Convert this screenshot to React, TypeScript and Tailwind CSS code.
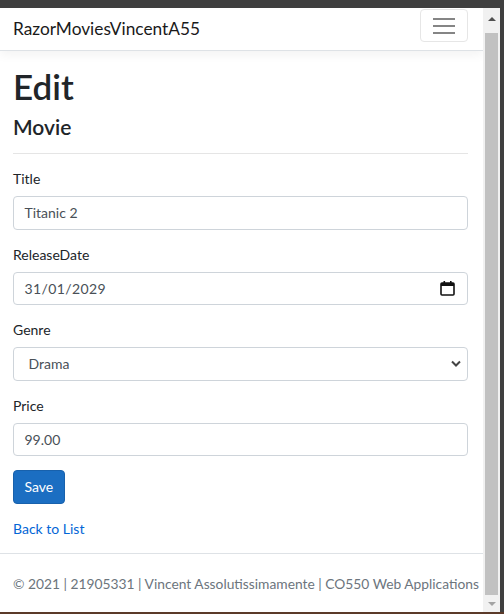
import React from 'react';

const font = { fontFamily: 'Lato, "Open Sans", sans-serif' };

function Field({ label, children }: { label: string; children: React.ReactNode }) {
  return (
    <div className="mb-[14px]">
      <div className="mb-[7px] h-[21px] text-[14px] leading-[21px] text-[#212529]">{label}</div>
      {children}
    </div>
  );
}

function Box({ children }: { children: React.ReactNode }) {
  return (
    <div className="flex h-[33.5px] items-center rounded-[4px] border border-[#ced4da] bg-white px-[10.5px] text-[14px] text-[#495057]">
      {children}
    </div>
  );
}

function Scrollbar() {
  return (
    <div className="flex w-[17px] flex-col items-center bg-[#f1f1f1]">
      <div className="flex h-[17px] w-full items-center justify-center">
        <div className="mt-[4px] h-0 w-0 border-x-[4px] border-b-[4px] border-x-transparent border-b-[#505050]" />
      </div>
      <div className="mt-[8px] w-[13px] flex-1 bg-[#c1c1c1]" />
      <div className="flex h-[17px] w-full items-center justify-center">
        <div className="h-0 w-0 border-x-[4px] border-t-[4px] border-x-transparent border-t-[#a3a3a3]" />
      </div>
    </div>
  );
}

export default function App() {
  return (
    <div className="flex h-[616px] w-[504px] flex-col overflow-hidden bg-white" style={font}>
      <div className="h-[8px] shrink-0 bg-[#3f3f3f]" />
      <div className="flex h-[604px] shrink-0">
        <div className="flex w-[483px] flex-col overflow-hidden">
          {/* navbar */}
          <div className="relative flex h-[43px] shrink-0 items-center justify-between border-b border-[#dee2e6] bg-white pl-[13px] pr-[15px] shadow-[0_4px_10px_rgba(0,0,0,0.05)]">
            <span className="text-[17.3px] text-[#1a1a1a]">RazorMoviesVincentA55</span>
            <div className="mt-[1px] flex h-[33px] w-[48px] flex-col items-center justify-center gap-[5px] self-start rounded-[4px] border border-[#e6e6e6]">
              <span className="h-[2px] w-[22px] bg-[#858585]" />
              <span className="h-[2px] w-[22px] bg-[#858585]" />
              <span className="h-[2px] w-[22px] bg-[#858585]" />
            </div>
          </div>

          {/* main */}
          <div className="shrink-0 pl-[13px] pr-[15px] pt-[14px] pb-[14px] text-[#212529]">
            <h1 className="mb-[7px] text-[35px] font-semibold leading-[42px]">Edit</h1>
            <h4 className="mb-0 text-[21px] font-semibold leading-[25px]">Movie</h4>
            <hr className="my-[14px] border-t border-[#e5e5e5]" />

            <Field label="Title">
              <Box>Titanic 2</Box>
            </Field>
            <Field label="ReleaseDate">
              <Box>
                <span className="flex-1 tracking-[0.4px]">31/01/2029</span>
                <svg width="15" height="16" viewBox="0 0 15 16" className="mr-[2px]">
                  <rect x="1" y="3" width="13" height="12" rx="1" fill="none" stroke="#111" strokeWidth="1.6" />
                  <rect x="1" y="3" width="13" height="3" fill="#111" />
                  <rect x="3.5" y="1" width="1.6" height="3" fill="#111" />
                  <rect x="10" y="1" width="1.6" height="3" fill="#111" />
                </svg>
              </Box>
            </Field>
            <Field label="Genre">
              <Box>
                <span className="flex-1 pl-[4px]">Drama</span>
                <svg width="10" height="7" viewBox="0 0 10 7" className="mr-[-4px]">
                  <path d="M1 1.5 L5 5.5 L9 1.5" fill="none" stroke="#444" strokeWidth="2" />
                </svg>
              </Box>
            </Field>
            <Field label="Price">
              <Box>99.00</Box>
            </Field>

            <div className="mb-[14px]">
              <button className="h-[33.5px] rounded-[4px] border border-[#1861ac] bg-[#1b6ec2] px-[10.5px] text-[14px] text-white">
                Save
              </button>
            </div>
            <div className="h-[21px] text-[14px] leading-[21px]">
              <a className="text-[#0366d6]">Back to List</a>
            </div>
          </div>

          {/* footer */}
          <div className="shrink-0 border-t border-[#dee2e6] pl-[13px] text-[13.8px] leading-[60px] whitespace-nowrap text-[#6c757d]">
            © 2021 | 21905331 | Vincent Assolutissimamente | CO550 Web Applications
          </div>
        </div>
        <Scrollbar />
        <div className="w-[4px] bg-[#3f3f3f]" />
      </div>
      <div className="h-[2px] shrink-0 bg-[#5b3a29]" />
      <div className="flex-1 bg-white" />
    </div>
  );
}
